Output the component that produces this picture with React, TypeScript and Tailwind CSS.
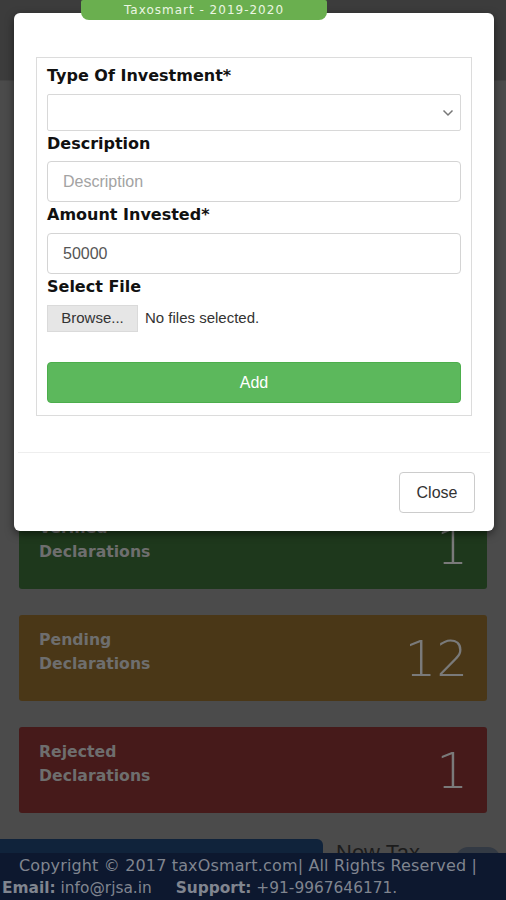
import React from "react";

const dv = { fontFamily: '"DejaVu Sans", Verdana, sans-serif' };
const ls = { fontFamily: '"Liberation Sans", Arial, sans-serif' };

function Card({ bg, title, num }: { bg: string; title: string; num: string }) {
  return (
    <div className={`mx-[19px] h-[86px] rounded-[3px] ${bg} flex items-start justify-between pl-[20px] pr-[19px]`}>
      <div className="pt-[13px] text-[15.7px] font-bold leading-[24px] text-[#6e6e6e]" style={dv}>
        <div>{title}</div>
        <div>Declarations</div>
      </div>
      <div className="pt-[16px] text-[50px] font-light leading-[56px] text-[#7a7a7a]" style={dv}>
        {num}
      </div>
    </div>
  );
}

export default function App() {
  return (
    <div className="relative w-[506px] h-[900px] overflow-hidden bg-[#4b4b4b]">
      {/* background page */}
      <div className="flex flex-col">
        <div className="h-[81px] bg-[#3c3c3c] border-b border-[#444]" />
        <div className="h-[422px]" />
        <div className="flex flex-col gap-[26px]">
          <Card bg="bg-[#1e381c]" title="Verified" num="1" />
          <Card bg="bg-[#4a3717]" title="Pending" num="12" />
          <Card bg="bg-[#461a1a]" title="Rejected" num="1" />
        </div>
        <div className="mt-[26px] flex items-start">
          <div className="w-[323px] h-[40px] rounded-tr-[6px] bg-[#10233b]" />
          <div className="ml-[13px] text-[22px] leading-[24px] text-[#1c1c1c] pt-[2px]" style={ls}>New Tax</div>
          <div className="ml-auto mr-[6px] mt-[8px] w-[44px] h-[24px] rounded-full bg-[#333a44]" />
        </div>
      </div>

      {/* footer */}
      <div className="absolute left-0 right-0 bottom-0 h-[47px] bg-[#0d182f] text-[#80858f] text-[16px] leading-[23px] tracking-[0.15px]" style={dv}>
        <div className="pl-[19px] pt-[1px] whitespace-nowrap">Copyright © 2017 taxOsmart.com| All Rights Reserved |</div>
        <div className="pl-[2px] whitespace-nowrap text-[15.4px] tracking-[0px]">
          <b>Email:</b> info@rjsa.in <span className="inline-block w-[19px]" />
          <b>Support:</b> +91-9967646171.
        </div>
      </div>

      {/* modal */}
      <div className="absolute left-[14px] top-[13px] w-[480px] h-[518px] bg-white rounded-[6px] shadow-[0_3px_9px_rgba(0,0,0,0.5)]">
        <div className="absolute left-[67px] top-[-13px] w-[246px] h-[20px] bg-[#6aaf4f] rounded-b-[8px] rounded-t-[2px] flex items-center justify-center text-[12px] tracking-[1px] text-[#eaf6e2]" style={dv}>
          Taxosmart - 2019-2020
        </div>
        <div className="flex flex-col h-full">
          <div className="px-[22px] pt-[44px] pb-[36px]">
            <div className="border border-[#dcdcdc] px-[10px] pt-[6px] pb-[12px]">
              <div className="text-[16px] font-bold text-[#111] leading-[24px]" style={dv}>Type Of Investment*</div>
              <div className="mt-[6px] h-[37px] border border-[#d8d8d8] rounded-[2px] flex items-center justify-end pr-[6px]">
                <svg width="12" height="8" viewBox="0 0 12 8" fill="none" stroke="#777" strokeWidth="1.5">
                  <path d="M1.5 1.5 L6 6 L10.5 1.5" />
                </svg>
              </div>
              <div className="mt-[1px] text-[16px] font-bold text-[#111] leading-[24px]" style={dv}>Description</div>
              <div className="mt-[5px] h-[41px] border border-[#d4d4d4] rounded-[4px] flex items-center pl-[15px] text-[16px] text-[#a3a3a3]" style={ls}>
                Description
              </div>
              <div className="mt-[1px] text-[16px] font-bold text-[#111] leading-[24px]" style={dv}>Amount Invested*</div>
              <div className="mt-[6px] h-[41px] border border-[#d4d4d4] rounded-[4px] flex items-center pl-[15px] text-[16px] text-[#555]" style={ls}>
                50000
              </div>
              <div className="mt-[1px] text-[16px] font-bold text-[#111] leading-[24px]" style={dv}>Select File</div>
              <div className="mt-[6px] flex items-center">
                <div className="w-[91px] h-[27px] bg-[#e6e6e6] border border-[#dadada] flex items-center justify-center text-[15px] text-[#333]" style={ls}>
                  Browse...
                </div>
                <div className="ml-[7px] text-[15px] text-[#333]" style={ls}>No files selected.</div>
              </div>
              <div className="mt-[30px] h-[41px] rounded-[4px] bg-[#5cb85c] border border-[#4cae4c] flex items-center justify-center text-[16px] text-white" style={ls}>
                Add
              </div>
            </div>
          </div>
          <div className="border-t border-[#eeeeee] mx-[4px] flex justify-end pt-[19px] pr-[15px]">
            <div className="w-[76px] h-[41px] border border-[#cccccc] rounded-[4px] flex items-center justify-center text-[16px] text-[#333]" style={ls}>
              Close
            </div>
          </div>
        </div>
      </div>
    </div>
  );
}
